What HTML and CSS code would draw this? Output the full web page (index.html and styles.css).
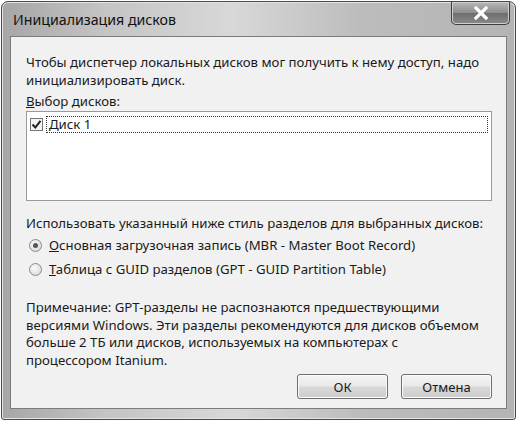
FILE: index.html
```html
<!DOCTYPE html>
<html lang="ru">
<head>
<meta charset="utf-8">
<link rel="stylesheet" href="styles.css">
</head>
<body>
<div class="window">
  <div class="titlebar">
    <span class="title">Инициализация дисков</span>
    <div class="close">
      <svg width="18" height="14" viewBox="0 0 18 14"><path d="M4 2 L14 12 M14 2 L4 12" stroke="#fff" stroke-width="3.2" stroke-linecap="square"/></svg>
    </div>
  </div>
  <div class="content">
    <p class="intro">Чтобы диспетчер локальных дисков мог получить к нему доступ, надо<br>инициализировать диск.</p>
    <div class="label"><u>В</u>ыбор дисков:</div>
    <div class="listbox">
      <div class="item">
        <span class="check"><svg width="11" height="11" viewBox="0 0 11 11"><path d="M1.5 5.5 L4.3 8.5 L9.5 1.8" fill="none" stroke="#222" stroke-width="2"/></svg></span>
        <span class="itemtext">Диск 1</span>
      </div>
    </div>
    <div class="style-label">Использовать указанный ниже стиль разделов для выбранных дисков:</div>
    <div class="radios">
      <div class="radio-row"><span class="radio on"><span class="dot"></span></span><span><u>О</u>сновная загрузочная запись (MBR - Master Boot Record)</span></div>
      <div class="radio-row"><span class="radio"></span><span><u>Т</u>аблица с GUID разделов (GPT - GUID Partition Table)</span></div>
    </div>
    <p class="note">Примечание: GPT-разделы не распознаются предшествующими<br>версиями Windows. Эти разделы рекомендуются для дисков объемом<br>больше 2 ТБ или дисков, используемых на компьютерах с<br>процессором Itanium.</p>
    <div class="buttons">
      <button class="btn">ОК</button>
      <button class="btn">Отмена</button>
    </div>
  </div>
</div>
</body>
</html>
```
FILE: styles.css
```css
html, body { margin: 0; padding: 0; background: #fff; }
body { font-family: "Noto Sans", "Open Sans", sans-serif; font-size: 13.2px; color: #1a1a1a; }
.window {
  position: relative;
  margin: 1px 0 0 1px;
  width: 497px;
  height: 409px;
  padding: 0 8px 8px 8px;
  border: 1px solid #4a4a4a;
  border-radius: 7px 7px 3px 3px;
  background: linear-gradient(90deg, #a6a6a6 0%, #c4c4c4 20%, #d8d8d8 45%, #bcbcbc 70%, #b4b4b4 100%);
  box-shadow: inset 0 0 0 1px #e4e4e4;
}
.titlebar {
  height: 34px;
  display: flex;
  align-items: center;
  padding-left: 3px;
}
.title { font-size: 14.2px; color: #111; padding-top: 1px; }
.close {
  position: absolute;
  top: 0;
  right: 5px;
  width: 57px;
  height: 22px;
  border: 1px solid #3e3e3e;
  border-top: none;
  border-radius: 0 0 5px 5px;
  background: linear-gradient(#b8b8b8, #8c8c8c 50%, #6e6e6e 51%, #8a8a8a);
  display: flex;
  align-items: center;
  justify-content: center;
  box-shadow: inset 0 0 0 1px #cfcfcf;
}
.content {
  height: 373px;
  background: #f1f1f1;
  border: 1px solid #7c7c7c;
  padding: 16px 14px 0 15px;
  box-sizing: border-box;
  display: flex;
  flex-direction: column;
}
.intro { margin: 0; line-height: 18px; white-space: nowrap; }
.label { margin-top: 3px; line-height: 18px; }
.listbox {
  margin-top: 1px;
  height: 90px;
  background: #fff;
  border: 1px solid #9a9a9a;
  box-sizing: border-box;
  padding: 4px 3px 0 3px;
}
.item { display: flex; align-items: center; height: 17px; }
.check {
  width: 11px; height: 11px;
  border: 1px solid #777;
  background: #f4f4f4;
  display: flex; align-items: center; justify-content: center;
  flex: none;
}
.itemtext {
  flex: 1;
  margin-left: 3px;
  padding-left: 2px;
  height: 15px;
  line-height: 15px;
  border: 1px dotted #333;
}
.style-label { margin-top: 13px; line-height: 18px; white-space: nowrap; }
.radios { margin-top: 4px; padding-left: 3px; }
.radio-row { display: flex; align-items: center; height: 18px; margin-bottom: 6px; white-space: nowrap; }
.radio-row:last-child { margin-bottom: 0; }
.radio {
  width: 11px; height: 11px;
  border-radius: 50%;
  border: 1px solid #8a8a8a;
  background: radial-gradient(circle at 40% 40%, #fafafa, #d4d4d4);
  margin-right: 7px;
  display: flex; align-items: center; justify-content: center;
  flex: none;
}
.dot { width: 5px; height: 5px; border-radius: 50%; background: #555; }
.note { margin: 21px 0 0 0; line-height: 17.5px; white-space: nowrap; }
.buttons {
  margin-top: auto;
  margin-bottom: 9px;
  display: flex;
  justify-content: flex-end;
  gap: 13px;
}
.btn {
  width: 91px;
  height: 25px;
  font-family: inherit;
  font-size: 13px;
  color: #1a1a1a;
  border: 1px solid #6e6e6e;
  border-radius: 3px;
  background: linear-gradient(#f4f4f4, #e9e9e9 48%, #d8d8d8 52%, #cdcdcd);
  box-shadow: inset 0 0 0 1px #fcfcfc;
}
```
